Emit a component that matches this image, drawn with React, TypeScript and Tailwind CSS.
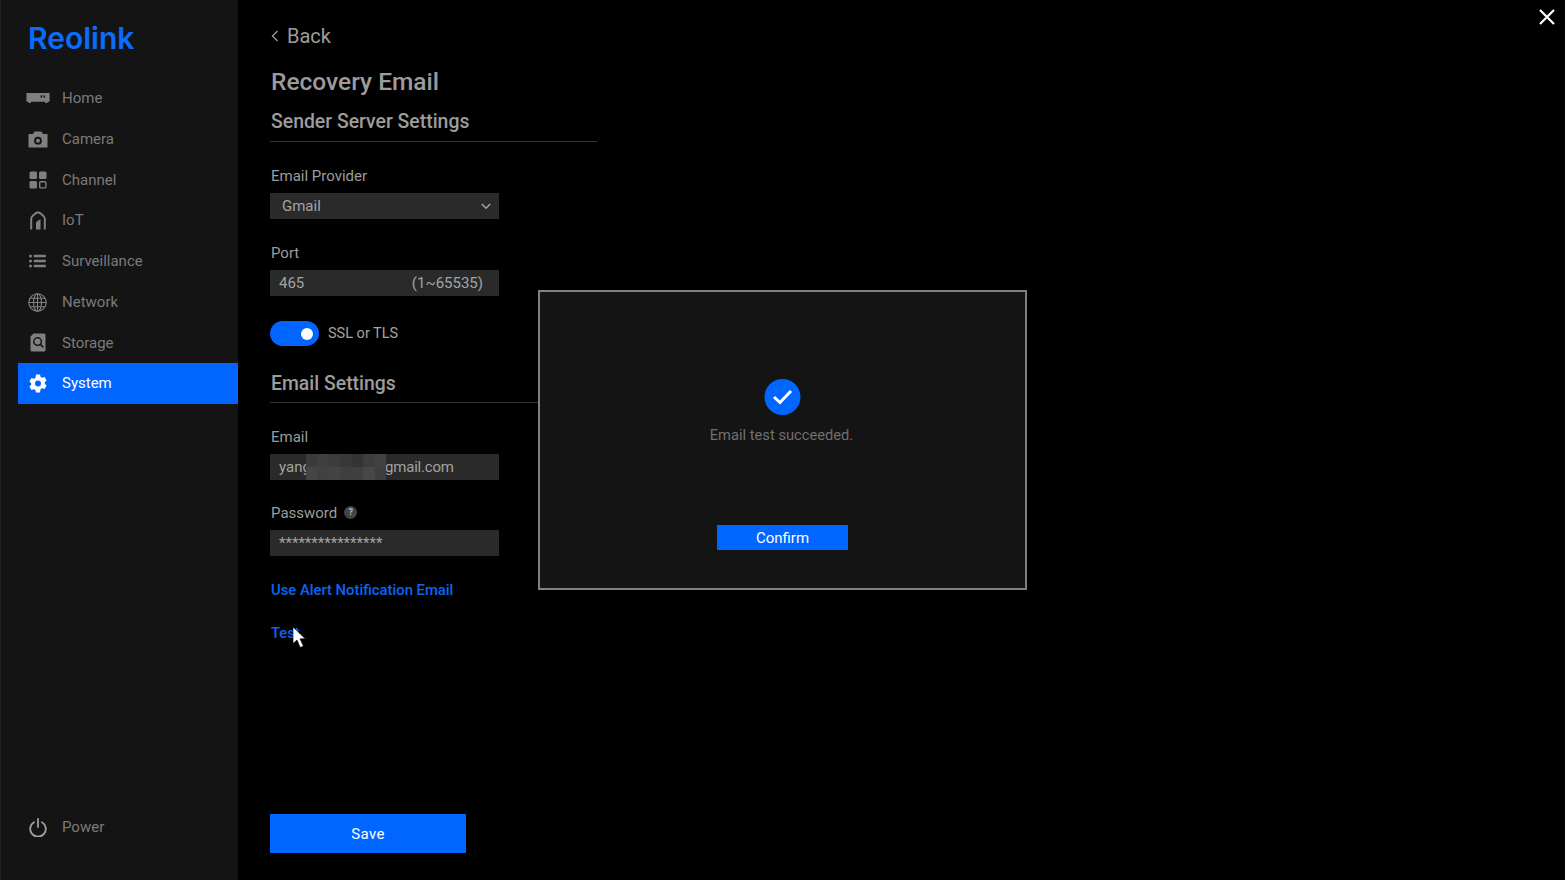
import React from "react";

const font = { fontFamily: "Roboto, 'Liberation Sans', sans-serif" };

function HomeIcon() {
  return (
    <svg width="24" height="12" viewBox="0 0 24 12" fill="none">
      <path d="M1 1h22a.6.6 0 0 1 .6.6V9a.8.8 0 0 1-.8.8H21.500v1.200h-2.500V9.800H5v1.200H2.500V9.800H1.200A.8.800 0 0 1 .4 9V1.600A.6.600 0 0 1 1 1z" fill="#808080" />
      <rect x="14.500" y="3.400" width="1.700" height="2.200" fill="#161616" />
      <rect x="17.500" y="3.400" width="1.700" height="2.200" fill="#161616" />
    </svg>
  );
}
function CameraIcon() {
  return (
    <svg width="20" height="17" viewBox="0 0 20 17">
      <path fillRule="evenodd" d="M.5 3h4.500L6.500.5h7L15 3h4.500v13.500H.5V3zM10 5.800a3.900 3.900 0 1 0 0 7.800 3.900 3.900 0 0 0 0-7.800z" fill="#808080" />
      <circle cx="10" cy="9.700" r="2" fill="#808080" />
    </svg>
  );
}
function ChannelIcon() {
  return (
    <svg width="18" height="18" viewBox="0 0 18 18" fill="none">
      <rect x="0.500" y="0.500" width="7.500" height="7.500" rx="1.500" fill="#808080" />
      <rect x="10" y="0.500" width="7.500" height="7.500" rx="1.500" fill="#808080" />
      <rect x="0.500" y="10" width="7.500" height="7.500" rx="1.500" fill="#808080" />
      <rect x="10.700" y="10.700" width="6.200" height="6.200" rx="1" stroke="#808080" strokeWidth="1.400" />
    </svg>
  );
}
function IotIcon() {
  return (
    <svg width="16" height="19" viewBox="0 0 16 19" fill="none">
      <path d="M1.200 18.500V7.200C1.200 5.500 6 1.500 8 1.200c2 .3 6.800 4.300 6.800 6V18.500" stroke="#808080" strokeWidth="2" />
      <path d="M6 18.500V12c0-1 3-3.500 4.500-3.500V18.500z" fill="#808080" />
    </svg>
  );
}
function SurveillanceIcon() {
  return (
    <svg width="17" height="14" viewBox="0 0 17 14" fill="#808080">
      <rect x="0" y="0.500" width="3" height="3" rx="1.500" />
      <rect x="0" y="5.500" width="3" height="3" rx="1.500" />
      <rect x="0" y="10.500" width="3" height="3" rx="1.500" />
      <rect x="4.800" y="0.700" width="12" height="2.600" rx="0.500" />
      <rect x="4.800" y="5.700" width="12" height="2.600" rx="0.500" />
      <rect x="4.800" y="10.700" width="12" height="2.600" rx="0.500" />
    </svg>
  );
}
function NetworkIcon() {
  return (
    <svg width="19" height="19" viewBox="0 0 19 19" fill="none" stroke="#808080" strokeWidth="1.100">
      <circle cx="9.500" cy="9.500" r="8.700" />
      <ellipse cx="9.500" cy="9.500" rx="4" ry="8.700" />
      <path d="M9.500 .8v17.400M.8 9.500h17.400M2 5.200h15M2 13.800h15" />
    </svg>
  );
}
function StorageIcon() {
  return (
    <svg width="16" height="19" viewBox="0 0 16 19" fill="none">
      <path d="M3.500.5H14a1.500 1.500 0 0 1 1.500 1.500v15a1.500 1.500 0 0 1-1.500 1.500H2A1.500 1.500 0 0 1 .5 17V3.500z" fill="#808080" />
      <circle cx="7.600" cy="8.600" r="3.800" stroke="#161616" strokeWidth="1.500" />
      <path d="M10.400 11.400l3 3" stroke="#161616" strokeWidth="1.500" />
    </svg>
  );
}
function GearIcon() {
  return (
    <svg width="18" height="19" viewBox="0 0 18 19">
      <path
        fillRule="evenodd"
        fill="#ffffff"
        d="M7 .5h4l.6 2.400 1.600.9 2.400-.7 2 3.400-1.800 1.700v1.600l1.800 1.700-2 3.400-2.400-.7-1.600.9L11 18.500H7l-.6-2.400-1.600-.9-2.400.7-2-3.400 1.800-1.700V9.200L.4 7.500l2-3.400 2.400.7 1.600-.9L7 .5zM9 6.500a3 3 0 1 0 0 6 3 3 0 0 0 0-6z"
      />
    </svg>
  );
}
function PowerIcon() {
  return (
    <svg width="18" height="19" viewBox="0 0 18 19" fill="none" stroke="#a0a0a0" strokeWidth="1.800" strokeLinecap="round">
      <path d="M9 1v8" />
      <path d="M5 4.200a7.800 7.800 0 1 0 8 0" />
    </svg>
  );
}

const items: { label: string; icon: React.ReactNode; active?: boolean }[] = [
  { label: "Home", icon: <HomeIcon /> },
  { label: "Camera", icon: <CameraIcon /> },
  { label: "Channel", icon: <ChannelIcon /> },
  { label: "IoT", icon: <IotIcon /> },
  { label: "Surveillance", icon: <SurveillanceIcon /> },
  { label: "Network", icon: <NetworkIcon /> },
  { label: "Storage", icon: <StorageIcon /> },
  { label: "System", icon: <GearIcon />, active: true },
];

const mosaic = [
  "bg-[#3b3b3b]", "bg-[#3f3f3f]", "bg-[#3c3c3c]", "bg-[#383838]", "bg-[#333333]", "bg-[#3d3d3d]", "bg-[#414141]",
  "bg-[#454545]", "bg-[#414141]", "bg-[#444444]", "bg-[#3f3f3f]", "bg-[#404040]", "bg-[#474747]", "bg-[#3e3e3e]",
];

function NavRow({ label, icon, active }: { label: string; icon: React.ReactNode; active?: boolean }) {
  return (
    <div className={`flex h-[40.75px] items-center ${active ? "bg-[#0066ff] text-white" : "text-[#7a7a7a]"}`}>
      <div className="flex w-[39px] shrink-0 items-center justify-center">{icon}</div>
      <span className="ml-[5px] text-[15px]">{label}</span>
    </div>
  );
}

function Label({ children, className = "" }: { children: React.ReactNode; className?: string }) {
  return <div className={`pl-px text-[15px] leading-[18px] text-[#9c9c9c] ${className}`}>{children}</div>;
}

export default function App() {
  return (
    <div style={font} className="relative flex h-[880px] w-[1565px] overflow-hidden bg-black">
      <aside className="flex h-full w-[238px] shrink-0 flex-col border-l border-[#222222] bg-[#141414]">
        <div className="flex h-[78px] items-start pl-[27px] pt-[17px]">
          <span className="text-[30px] font-semibold leading-[42px] text-[#0a6cff]" style={{ fontFamily: "Inter, sans-serif" }}>
            Reolink
          </span>
        </div>
        <nav className="ml-[17px] flex flex-col">
          {items.map((it) => (
            <NavRow key={it.label} {...it} />
          ))}
        </nav>
        <div className="mt-auto mb-[32px] ml-[17px]">
          <NavRow label="Power" icon={<PowerIcon />} />
        </div>
      </aside>

      <main className="flex min-w-0 flex-1 flex-col pl-[32px] pt-[24px]">
        <div className="flex h-[24px] items-center gap-[8px] pl-px text-[#9c9c9c]">
          <svg width="8" height="12" viewBox="0 0 8 12" fill="none" stroke="#9c9c9c" strokeWidth="1.300">
            <path d="M6.500 1 1.500 6l5 5" />
          </svg>
          <span className="text-[20px] leading-[24px]">Back</span>
        </div>
        <h1 className="mt-[20px] pl-px text-[24.500px] font-medium leading-[28px] text-[#9c9c9c]">Recovery Email</h1>
        <h2 className="mt-[14px] pl-px text-[19.400px] font-medium leading-[24px] text-[#9c9c9c]">Sender Server Settings</h2>
        <div className="mt-[7px] h-px w-[327px] bg-[#333333]" />

        <Label className="mt-[25px]">Email Provider</Label>
        <div className="mt-[8px] flex h-[26px] w-[229px] items-center justify-between bg-[#2a2a2a] pl-[12px] pr-[8px] text-[15px] text-[#a3a3a3]">
          <span>Gmail</span>
          <svg width="10" height="7" viewBox="0 0 10 7" fill="none" stroke="#a3a3a3" strokeWidth="1.500">
            <path d="M.8 1 5 5.300 9.200 1" />
          </svg>
        </div>

        <Label className="mt-[25px]">Port</Label>
        <div className="mt-[8px] flex h-[26px] w-[229px] items-center justify-between bg-[#2a2a2a] pl-[9px] pr-[16px] text-[15px] text-[#a3a3a3]">
          <span>465</span>
          <span>(1~65535)</span>
        </div>

        <div className="mt-[25px] flex h-[25px] items-center gap-[9px]">
          <div className="flex h-[25px] w-[49px] items-center justify-end rounded-full bg-[#0066ff] pr-[6px]">
            <div className="h-[12px] w-[12px] rounded-full bg-white" />
          </div>
          <span className="text-[14.500px] text-[#a3a3a3]">SSL or TLS</span>
        </div>

        <h2 className="mt-[26px] pl-px text-[19.400px] font-medium leading-[24px] text-[#9c9c9c]">Email Settings</h2>
        <div className="mt-[6px] h-px w-[327px] bg-[#333333]" />

        <Label className="mt-[25px]">Email</Label>
        <div className="relative mt-[8px] flex h-[26px] w-[229px] items-center bg-[#2a2a2a] pl-[9px] text-[15px] text-[#a3a3a3]">
          <span className="w-[106px] shrink-0 overflow-hidden">yang</span>
          <span className="tracking-[-0.2px]">gmail.com</span>
          <div className="absolute left-[36px] top-0 grid h-full w-[80px] grid-cols-7 grid-rows-2">
            {mosaic.map((c, i) => (
              <div key={i} className={c} />
            ))}
          </div>
        </div>

        <div className="mt-[24px] flex items-center gap-[7px]">
          <Label>Password</Label>
          <div className="mb-[2px] flex h-[13px] w-[13px] items-center justify-center rounded-full bg-[#444444] text-[9px] font-bold leading-none text-[#b5b5b5]">?</div>
        </div>
        <div className="mt-[8px] flex h-[26px] w-[229px] items-center bg-[#2a2a2a] pl-[9px] text-[15px] text-[#a3a3a3]">
          <span>****************</span>
        </div>

        <div className="mt-[25px] pl-px text-[14.800px] font-medium leading-[18px] text-[#0a66f5]">Use Alert Notification Email</div>
        <div className="relative mt-[25px] w-fit pl-px text-[14.800px] font-medium leading-[18px] text-[#0a66f5]">
          <span>Test</span>
          <svg className="absolute left-[22px] top-[2px]" width="15" height="23" viewBox="0 0 15 23">
            <path d="M1 1v16.500l4-3.500 3.200 7.500 3.200-1.400L8 12.800h5.300z" fill="#ffffff" stroke="#000000" strokeWidth="0.600" />
          </svg>
        </div>

        <button className="mt-[172px] h-[39px] w-[196px] bg-[#0066ff] pt-px text-[15px] tracking-[0.3px] text-white">Save</button>
      </main>

      <div className="absolute left-[538px] top-[290px] flex h-[300px] w-[489px] flex-col items-center border-2 border-[#808080] bg-[#141414]">
        <div className="mt-[87px] flex h-[36px] w-[36px] -translate-x-[0.5px] items-center justify-center rounded-full bg-[#0066ff]">
          <svg width="20" height="16" viewBox="0 0 20 16" fill="none" stroke="#ffffff" strokeWidth="3">
            <path d="M1.500 8 7.500 13.500 18.500 2" />
          </svg>
        </div>
        <div className="mt-[11px] -translate-x-[1px] text-[14.700px] leading-[18px] text-[#707070]">Email test succeeded.</div>
        <button className="mt-[81px] h-[25px] w-[131px] bg-[#0066ff] pt-px text-[15px] leading-none text-white">Confirm</button>
      </div>

      <svg className="absolute left-[1538px] top-[8px]" width="18" height="18" viewBox="0 0 18 18" fill="none" stroke="#ffffff" strokeWidth="2.200">
        <path d="M2 2l14 14M16 2 2 16" />
      </svg>
    </div>
  );
}
